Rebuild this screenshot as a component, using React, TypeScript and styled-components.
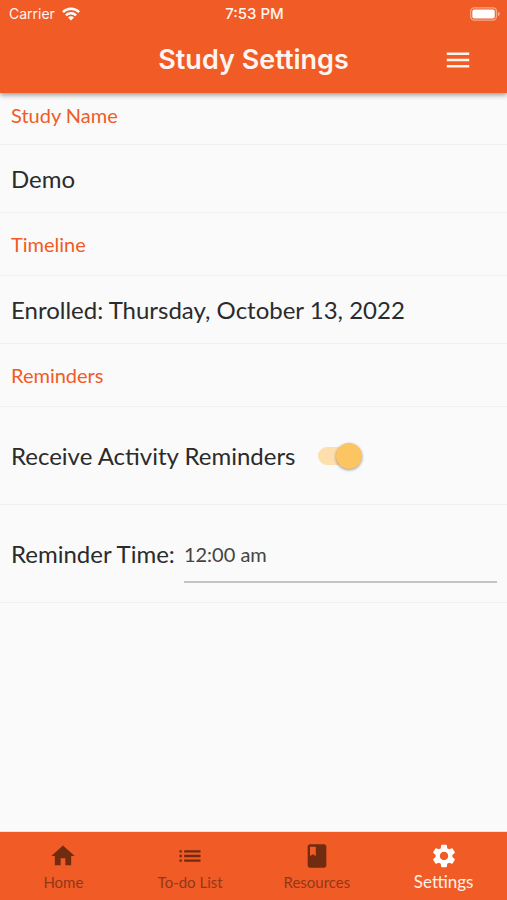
import React, { useState } from "react";
import styled, { createGlobalStyle } from "styled-components";

const GlobalStyle = createGlobalStyle`
  *, *::before, *::after { box-sizing: border-box; }
  body { margin: 0; background: #fafafa; }
`;

const Screen = styled.div`
  display: flex;
  flex-direction: column;
  min-height: 100vh;
  background: #fafafa;
  color: #2b2b2b;
  font-family: Lato, "Liberation Sans", sans-serif;
`;

const Header = styled.header`
  background: #f15b25;
  color: #fff5f0;
  font-family: Inter, "Liberation Sans", sans-serif;
  box-shadow: 0 2px 5px rgba(0, 0, 0, 0.4);
`;

const StatusBar = styled.div`
  display: grid;
  grid-template-columns: 1fr auto 1fr;
  align-items: center;
  height: 27px;
  padding: 0 7px 0 9px;
  font-size: 14px;
`;

const Carrier = styled.span`
  display: flex;
  align-items: center;
  gap: 7px;
`;

const Clock = styled.span`
  font-size: 15px;
  font-weight: 500;
`;

const Battery = styled.svg`
  justify-self: end;
`;

const TitleBar = styled.div`
  display: grid;
  grid-template-columns: 1fr auto 1fr;
  align-items: center;
  height: 66px;
  padding: 0 34px;
`;

const Title = styled.h1`
  grid-column: 2;
  margin: 0;
  font-size: 27px;
  line-height: 32px;
  font-weight: 600;
`;

const MenuButton = styled.button`
  display: flex;
  justify-self: end;
  padding: 0;
  border: 0;
  background: none;
  color: inherit;
  cursor: pointer;
`;

const Content = styled.main`
  flex: 1;
`;

const SectionTitle = styled.h2<{ $first?: boolean }>`
  display: flex;
  align-items: center;
  height: ${(p) => (p.$first ? 52 : 63)}px;
  margin: 0;
  padding: 0 11px ${(p) => (p.$first ? 8 : 0)}px;
  border-bottom: 1px solid #f0f0f0;
  color: #f15b25;
  font-size: 20px;
  line-height: 24px;
  font-weight: 400;
`;

const Row = styled.div<{ $tall?: boolean }>`
  display: flex;
  align-items: center;
  min-height: ${(p) => (p.$tall ? 98 : 68)}px;
  padding: 0 10px 0 11px;
  border-bottom: 1px solid #f0f0f0;
  font-size: 24px;
  line-height: 30px;
`;

const Switch = styled.input`
  appearance: none;
  display: flex;
  align-items: center;
  justify-content: flex-start;
  width: 44px;
  height: 18px;
  margin: 0 0 0 22px;
  border-radius: 9px;
  background: linear-gradient(#d5d5d5, #d5d5d5) left / 40px 18px no-repeat;
  cursor: pointer;

  &::before {
    content: "";
    flex: none;
    width: 26px;
    height: 26px;
    border-radius: 50%;
    background: #f5f5f5;
    box-shadow: 0 1px 3px rgba(0, 0, 0, 0.4);
  }

  &:checked {
    justify-content: flex-end;
    background-image: linear-gradient(#fddfae, #fddfae);
  }

  &:checked::before {
    background: #fdc562;
  }
`;

const TimeInput = styled.input`
  flex: 1;
  min-width: 0;
  height: 58px;
  margin-left: 9px;
  padding: 0;
  border: solid #c4c4c4;
  border-width: 2px 0;
  border-top-color: transparent;
  background: none;
  color: #444;
  font: 20px/24px Lato, "Liberation Sans", sans-serif;
`;

const BottomNav = styled.nav`
  display: grid;
  grid-template-columns: repeat(4, 1fr);
  height: 68px;
  background: #f15b25;
  box-shadow: 0 0 1px #f15b25;
`;

const NavLink = styled.a<{ $active?: boolean }>`
  display: flex;
  flex-direction: column;
  align-items: center;
  padding-top: 10px;
  color: ${(p) => (p.$active ? "#ffffff" : "#712b11")};
  font-size: ${(p) => (p.$active ? 17 : 15)}px;
  line-height: 24px;
  text-decoration: none;
`;

const NavLabel = styled.span<{ $active?: boolean }>`
  color: ${(p) => (p.$active ? "#fff0e9" : "#93371a")};
`;

const icons = {
  menu: "M3 18h18v-2H3v2zm0-5h18v-2H3v2zm0-7v2h18V6H3z",
  home: "M10 20v-6h4v6h5v-8h3L12 3 2 12h3v8z",
  list: "M3 13h2v-2H3v2zm0 4h2v-2H3v2zm0-8h2V7H3v2zm4 4h14v-2H7v2zm0 4h14v-2H7v2zM7 7v2h14V7H7z",
  book: "M18 2H6c-1.1 0-2 .9-2 2v16c0 1.1.9 2 2 2h12c1.1 0 2-.9 2-2V4c0-1.1-.9-2-2-2zM6 4h5v8l-2.5-1.5L6 12V4z",
  settings:
    "M19.14 12.94c.04-.3.06-.61.06-.94 0-.32-.02-.64-.07-.94l2.03-1.58c.18-.14.23-.41.12-.61l-1.92-3.32c-.12-.22-.37-.29-.59-.22l-2.39.96c-.5-.38-1.03-.7-1.62-.94l-.36-2.54c-.04-.24-.24-.41-.48-.41h-3.84c-.24 0-.43.17-.47.41l-.36 2.54c-.59.24-1.13.57-1.62.94l-2.39-.96c-.22-.08-.47 0-.59.22L2.74 8.87c-.12.21-.08.47.12.61l2.03 1.58c-.05.3-.09.63-.09.94s.02.64.07.94l-2.03 1.58c-.18.14-.23.41-.12.61l1.92 3.32c.12.22.37.29.59.22l2.39-.96c.5.38 1.03.7 1.62.94l.36 2.54c.05.24.24.41.48.41h3.84c.24 0 .44-.17.47-.41l.36-2.54c.59-.24 1.13-.56 1.62-.94l2.39.96c.22.08.47 0 .59-.22l1.92-3.32c.12-.22.07-.47-.12-.61l-2.01-1.58zM12 15.6c-1.98 0-3.6-1.62-3.6-3.6s1.62-3.6 3.6-3.6 3.6 1.62 3.6 3.6-1.62 3.6-3.6 3.6z",
};

function Icon({ name, size }: { name: keyof typeof icons; size: number }) {
  return (
    <svg width={size} height={size} viewBox="0 0 24 24" fill="currentColor" aria-hidden="true">
      <path d={icons[name]} />
    </svg>
  );
}

const tabs: { icon: keyof typeof icons; label: string; active?: boolean }[] = [
  { icon: "home", label: "Home" },
  { icon: "list", label: "To-do List" },
  { icon: "book", label: "Resources" },
  { icon: "settings", label: "Settings", active: true },
];

export default function App() {
  const [reminders, setReminders] = useState(true);
  const [time, setTime] = useState("12:00 am");

  return (
    <Screen>
      <GlobalStyle />
      <Header>
        <StatusBar>
          <Carrier>
            Carrier
            <svg width="18" height="14" viewBox="0 0 18 14" fill="none" stroke="#fff" strokeWidth="2.4" aria-hidden="true">
              <path d="M0.9 5.1a11.5 11.5 0 0 1 16.2 0" />
              <path d="M3.9 8.3a7.2 7.2 0 0 1 10.2 0" />
              <path d="M9 13.6 6 10.6a4.2 4.2 0 0 1 6 0z" fill="#fff" stroke="none" />
            </svg>
          </Carrier>
          <Clock>7:53 PM</Clock>
          <Battery width="30" height="14" viewBox="0 0 31 14" aria-hidden="true">
            <rect x="0.7" y="0.7" width="26.6" height="12.6" rx="3.6" fill="none" stroke="#f8a98a" strokeWidth="1.3" />
            <rect x="2.4" y="2.4" width="23.2" height="9.2" rx="2" fill="#fff" />
            <path d="M28.8 4.8q2 .7 2 2.2t-2 2.2z" fill="#f8a98a" />
          </Battery>
        </StatusBar>
        <TitleBar>
          <Title>Study Settings</Title>
          <MenuButton type="button" aria-label="Open menu">
            <Icon name="menu" size={30} />
          </MenuButton>
        </TitleBar>
      </Header>

      <Content>
        <SectionTitle $first>Study Name</SectionTitle>
        <Row>Demo</Row>
        <SectionTitle>Timeline</SectionTitle>
        <Row>Enrolled: Thursday, October 13, 2022</Row>
        <SectionTitle>Reminders</SectionTitle>
        <Row $tall>
          <label htmlFor="reminders">Receive Activity Reminders</label>
          <Switch
            id="reminders"
            type="checkbox"
            role="switch"
            checked={reminders}
            onChange={(e) => setReminders(e.target.checked)}
          />
        </Row>
        <Row $tall>
          <label htmlFor="reminder-time">Reminder Time:</label>
          <TimeInput id="reminder-time" type="text" value={time} onChange={(e) => setTime(e.target.value)} />
        </Row>
      </Content>

      <BottomNav>
        {tabs.map((tab) => (
          <NavLink
            key={tab.label}
            href={`#${tab.icon}`}
            $active={tab.active}
            aria-current={tab.active ? "page" : undefined}
          >
            <Icon name={tab.icon} size={28} />
            <NavLabel $active={tab.active}>{tab.label}</NavLabel>
          </NavLink>
        ))}
      </BottomNav>
    </Screen>
  );
}
